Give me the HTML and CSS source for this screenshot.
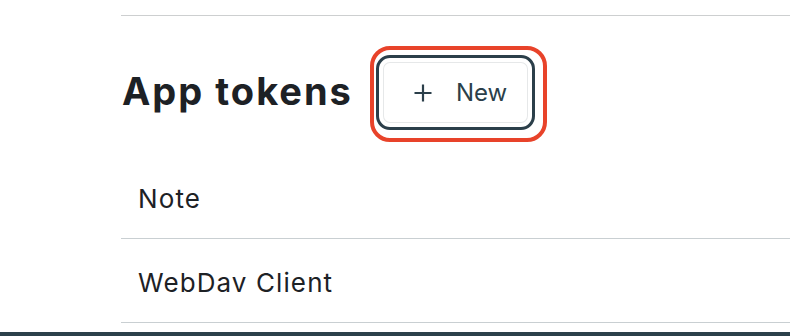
FILE: index.html
```html
<!DOCTYPE html>
<html lang="en">
<head>
<meta charset="utf-8">
<title>App tokens</title>
<link rel="stylesheet" href="styles.css">
</head>
<body>
<div class="page">
  <div class="section">
    <div class="header">
      <h2 class="title">App tokens</h2>
      <span class="highlight">
        <button class="new-btn" type="button">
          <svg class="plus" width="18" height="18" viewBox="0 0 18 18" aria-hidden="true">
            <path d="M9 0.5V17.5M0.5 9H17.5" stroke="currentColor" stroke-width="2.2" fill="none"/>
          </svg>
          <span class="btn-label">New</span>
        </button>
      </span>
    </div>
    <div class="row"><span class="row-text">Note</span></div>
    <div class="row"><span class="row-text">WebDav Client</span></div>
  </div>
  <div class="footer-bar"></div>
</div>
</body>
</html>
```
FILE: styles.css
```css
html, body {
  margin: 0;
  padding: 0;
  background: #ffffff;
}
body {
  width: 790px;
  height: 336px;
  overflow: hidden;
  font-family: Inter, Lato, "Liberation Sans", sans-serif;
  color: #1d2125;
}
.page {
  display: flex;
  flex-direction: column;
  height: 336px;
}
.section {
  margin-top: 15px;
  margin-left: 121px;
  border-top: 1px solid #cdcfd0;
}
.header {
  display: flex;
  align-items: center;
  gap: 17px;
  padding: 30px 0 13px 1px;
}
.title {
  margin: 0 0 6px 0;
  font-size: 38px;
  font-weight: 700;
  line-height: 1;
  letter-spacing: 2px;
}
.highlight {
  display: block;
  padding: 5px 8px 8px 2px;
  border: 4px solid #e8432a;
  border-radius: 20px;
}
.new-btn {
  display: flex;
  align-items: center;
  box-sizing: border-box;
  width: 159px;
  height: 75px;
  padding: 0 0 0 35px;
  gap: 24px;
  background: #ffffff;
  border: 3px solid #2b3f4a;
  border-radius: 14px;
  box-shadow: inset 0 0 0 4px #ffffff, inset 0 0 0 5px #e6e8e9;
  color: #2b3f4a;
  font-family: inherit;
  cursor: pointer;
}
.plus {
  display: block;
  flex: none;
}
.btn-label {
  font-size: 24px;
  font-weight: 400;
  line-height: 1;
}
.row {
  display: flex;
  align-items: center;
  box-sizing: border-box;
  height: 84px;
  padding: 4px 0 0 17px;
  border-bottom: 1px solid #c9cfd2;
}
.row-text {
  font-size: 26px;
  line-height: 1;
  letter-spacing: 1.1px;
}
.footer-bar {
  margin-top: auto;
  height: 4px;
  background: #2c414b;
}
```
